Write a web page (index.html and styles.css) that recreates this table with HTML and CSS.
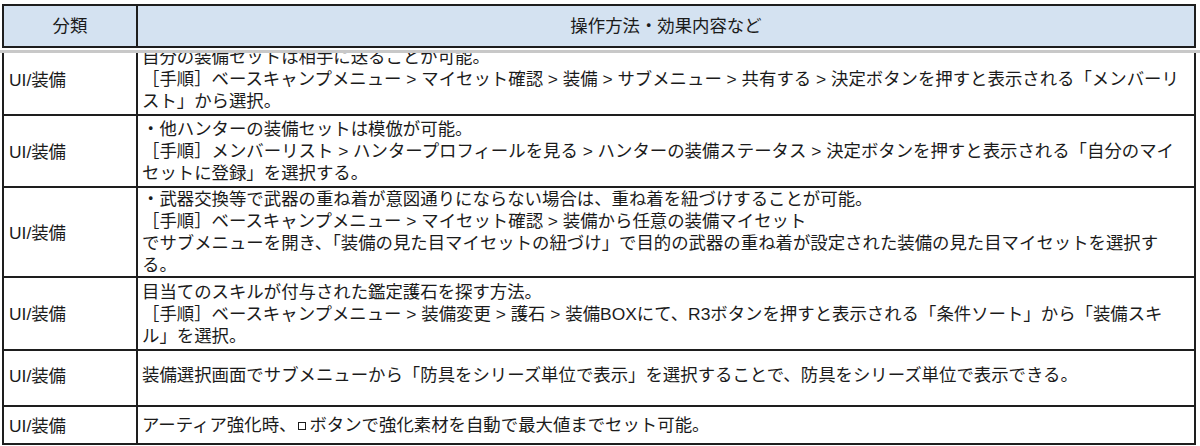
FILE: index.html
```html
<!DOCTYPE html>
<html lang="ja">
<head>
<meta charset="utf-8">
<title>装備 操作方法</title>
<link rel="stylesheet" href="styles.css">
</head>
<body>
<div class="page">
  <div class="head-wrap">
    <div class="sheet head">
      <div class="cell hcell">分類</div>
      <div class="cell hcell">操作方法・効果内容など</div>
    </div>
  </div>
  <div class="rule"></div>
  <div class="body-wrap">
    <div class="sheet body">
      <div class="cell cat">UI/装備</div>
      <div class="cell desc"><p>自分の装備セットは相手に送ることが可能。<br>［手順］ベースキャンプメニュー &gt; マイセット確認 &gt; 装備 &gt; サブメニュー &gt; 共有する &gt; 決定ボタンを押すと表示される「メンバーリ<br>スト」から選択。</p></div>

      <div class="cell cat">UI/装備</div>
      <div class="cell desc"><p>・他ハンターの装備セットは模倣が可能。<br>［手順］メンバーリスト &gt; ハンタープロフィールを見る &gt; ハンターの装備ステータス &gt; 決定ボタンを押すと表示される「自分のマイ<br>セットに登録」を選択する。</p></div>

      <div class="cell cat">UI/装備</div>
      <div class="cell desc"><p>・武器交換等で武器の重ね着が意図通りにならない場合は、重ね着を紐づけすることが可能。<br>［手順］ベースキャンプメニュー &gt; マイセット確認 &gt; 装備から任意の装備マイセット<br>でサブメニューを開き、「装備の見た目マイセットの紐づけ」で目的の武器の重ね着が設定された装備の見た目マイセットを選択す<br>る。</p></div>

      <div class="cell cat">UI/装備</div>
      <div class="cell desc"><p>目当てのスキルが付与された鑑定護石を探す方法。<br>［手順］ベースキャンプメニュー &gt; 装備変更 &gt; 護石 &gt; 装備BOXにて、R3ボタンを押すと表示される「条件ソート」から「装備スキ<br>ル」を選択。</p></div>

      <div class="cell cat lift">UI/装備</div>
      <div class="cell desc lift"><p>装備選択画面でサブメニューから「防具をシリーズ単位で表示」を選択することで、防具をシリーズ単位で表示できる。</p></div>

      <div class="cell cat">UI/装備</div>
      <div class="cell desc"><p>アーティア強化時、<span class="btn-sq" aria-label="□"></span>ボタンで強化素材を自動で最大値までセット可能。</p></div>
    </div>
  </div>
</div>
</body>
</html>
```

FILE: styles.css
```css
html, body {
  margin: 0;
  padding: 0;
  background: #ffffff;
}

body {
  font-family: "Liberation Sans", "Noto Sans CJK JP", sans-serif;
  font-size: 17.4px;
  color: #1b1b1b;
}

.page {
  width: 1200px;
  height: 446px;
  overflow: hidden;
}

.head-wrap {
  padding: 4px 4px 0 2px;
}

.rule {
  height: 3px;
  margin-top: 2px;
  background: #c8c8c8;
}

.body-wrap {
  height: 395px;
  overflow: hidden;
  padding: 0 4px 0 2px;
}

.sheet {
  display: grid;
  grid-template-columns: 134px 1fr;
  border-left: 2px solid #1e1e1e;
}

.cell {
  box-sizing: border-box;
  border-right: 2px solid #1e1e1e;
  border-bottom: 2px solid #1e1e1e;
  line-height: 22px;
  padding: 0 4px;
  display: flex;
  flex-direction: column;
  justify-content: center;
  overflow: hidden;
}

.head {
  border-top: 2px solid #1e1e1e;
  grid-template-rows: 42px;
  background: #d4e2f1;
}

.hcell {
  align-items: center;
  text-align: center;
}

.body {
  margin-top: -9px;
  grid-template-rows: 72px 72px 90px 73px 56px 38px;
}

.cat {
  padding-left: 5px;
  padding-top: 1px;
}

.desc p {
  margin: 0;
  white-space: nowrap;
}

.btn-sq {
  display: inline-block;
  width: 6px;
  height: 6px;
  border: 1px solid #1b1b1b;
  margin: 0 3px 0 2px;
  vertical-align: 1px;
}

.lift {
  padding-bottom: 6px;
}
```
